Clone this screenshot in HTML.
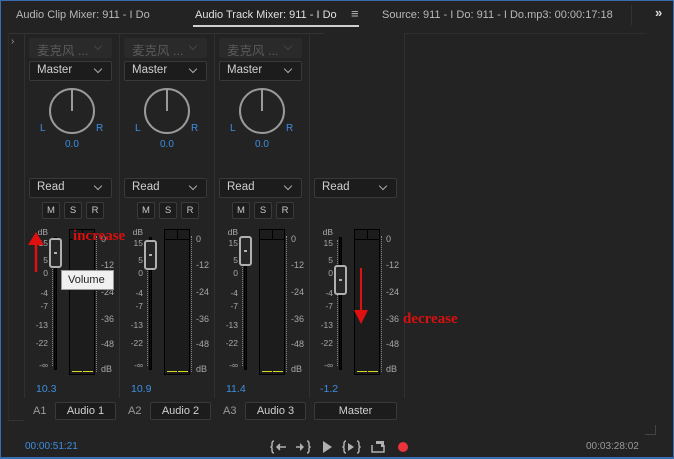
<!DOCTYPE html>
<html><head><meta charset="utf-8"><style>
*{margin:0;padding:0;box-sizing:border-box}
body{width:674px;height:459px;background:#232323;overflow:hidden;position:relative;font-family:"Liberation Sans","Noto Sans CJK SC",sans-serif;color:#cfcfcf}
.a{position:absolute}
.frame{position:absolute;left:0;top:0;width:674px;height:459px;border:1px solid #3a6db0;border-bottom:2px solid #3a6db0;pointer-events:none}
.tab{position:absolute;top:9px;font-size:11px;color:#b8b8b8;white-space:nowrap}
.dd{position:absolute;height:20px;border:1px solid #393939;background:#1c1c1c;border-radius:2px;font-size:11.5px;color:#d0d0d0;padding:2px 0 0 7px}
.dd i{position:absolute;right:10px;top:4px;width:6px;height:6px;border-right:1px solid #aaa;border-bottom:1px solid #aaa;transform:rotate(45deg)}
.cn{background:#2a2a2a;border-color:#2a2a2a;color:#5a5a5a;font-size:12.5px;padding-top:1px}
.cn i{border-color:#444}
.knob{position:absolute;width:46px;height:46px;border:2px solid #9a9a9a;border-radius:50%}
.knob:after{content:"";position:absolute;left:20px;top:-1px;width:2px;height:22px;background:#9a9a9a}
.blue{color:#3d8ee0}
.btn{position:absolute;top:202px;width:18px;height:17px;border:1px solid #3a3a3a;background:#1c1c1c;border-radius:2px;font-size:9.5px;text-align:center;line-height:15px;color:#c8c8c8}
.sm{position:absolute;font-size:8.5px;color:#a8a8a8;white-space:nowrap}
.track{position:absolute;width:3px;background:#0c0c0c;border:1px solid #000}
.fk{position:absolute;width:13px;height:30px;border:2px solid #b0b0b0;border-radius:3px;background:#262626}
.fk:after{content:"";position:absolute;left:3px;top:12px;width:3px;height:2px;background:#b0b0b0}
.meter{position:absolute;width:26px;height:146px;border:1px solid #000;background:#1c1c1c}
.meter:before{content:"";position:absolute;left:0;top:0;width:24px;height:9px;border-bottom:1px solid #000}
.meter:after{content:"";position:absolute;left:12px;top:0;width:1px;height:9px;background:#000}
.yl{position:absolute;bottom:2px;height:1px;width:10px;background:#d8d820}
.sep{position:absolute;top:33px;width:1px;height:365px;background:#303030}
.name{position:absolute;top:402px;height:18px;border:1px solid #393939;background:#1c1c1c;border-radius:2px;font-size:11px;text-align:center;line-height:16px;color:#d0d0d0}
.ticks{position:absolute;width:3px;border-left:1px dotted #888}
</style></head><body>

<div class="tab" style="left:16px">Audio Clip Mixer: 911 - I Do</div>
<div class="tab" style="left:195px;color:#e0e0e0">Audio Track Mixer: 911 - I Do</div>
<div class="a" style="left:193px;top:25px;width:166px;height:2px;background:#cfcfcf"></div>
<div class="tab" style="left:351px;top:6px;font-size:13px">≡</div>
<div class="tab" style="left:382px">Source: 911 - I Do: 911 - I Do.mp3: 00:00:17:18</div>
<div class="a" style="left:631px;top:5px;width:1px;height:20px;background:#333"></div>
<div class="tab" style="left:655px;top:5px;font-weight:bold;color:#ddd;font-size:13px">»</div>
<div class="a" style="left:8px;top:33px;width:316px;height:1px;background:#333"></div>
<div class="a" style="left:405px;top:33px;width:240px;height:1px;background:#2e2e2e"></div>
<div class="a" style="left:11px;top:36px;font-size:10px;color:#999">›</div>
<div class="a" style="left:8px;top:420px;width:16px;height:1px;background:#333"></div>
<div class="a" style="left:8px;top:33px;width:1px;height:387px;background:#2a2a2a"></div>

<div class="sep" style="left:24px"></div><div class="sep" style="left:119px"></div><div class="sep" style="left:214px"></div><div class="sep" style="left:309px"></div>
<div class="a" style="left:404px;top:33px;width:1px;height:365px;background:#303030"></div>

<div class="dd cn" style="left:29px;top:38px;width:83px">麦克风 ...<i></i></div>
<div class="dd" style="left:29px;top:61px;width:83px">Master<i></i></div>
<div class="knob" style="left:49px;top:88px"></div>
<div class="a blue" style="left:40px;top:123px;font-size:10px">L</div><div class="a blue" style="left:96px;top:123px;font-size:10px">R</div>
<div class="a blue" style="left:65px;top:139px;font-size:10px">0.0</div>
<div class="dd" style="left:29px;top:178px;width:83px">Read<i></i></div>
<div class="btn" style="left:42px">M</div><div class="btn" style="left:64px">S</div><div class="btn" style="left:86px">R</div>
<div class="a blue" style="left:36px;top:383px;font-size:10.5px">10.3</div>
<div class="a" style="left:33px;top:405px;font-size:11px;color:#999">A1</div>
<div class="name" style="left:55px;width:61px">Audio 1</div>

<div class="dd cn" style="left:124px;top:38px;width:83px">麦克风 ...<i></i></div>
<div class="dd" style="left:124px;top:61px;width:83px">Master<i></i></div>
<div class="knob" style="left:144px;top:88px"></div>
<div class="a blue" style="left:135px;top:123px;font-size:10px">L</div><div class="a blue" style="left:191px;top:123px;font-size:10px">R</div>
<div class="a blue" style="left:160px;top:139px;font-size:10px">0.0</div>
<div class="dd" style="left:124px;top:178px;width:83px">Read<i></i></div>
<div class="btn" style="left:137px">M</div><div class="btn" style="left:159px">S</div><div class="btn" style="left:181px">R</div>
<div class="a blue" style="left:131px;top:383px;font-size:10.5px">10.9</div>
<div class="a" style="left:128px;top:405px;font-size:11px;color:#999">A2</div>
<div class="name" style="left:150px;width:61px">Audio 2</div>

<div class="dd cn" style="left:219px;top:38px;width:83px">麦克风 ...<i></i></div>
<div class="dd" style="left:219px;top:61px;width:83px">Master<i></i></div>
<div class="knob" style="left:239px;top:88px"></div>
<div class="a blue" style="left:230px;top:123px;font-size:10px">L</div><div class="a blue" style="left:286px;top:123px;font-size:10px">R</div>
<div class="a blue" style="left:255px;top:139px;font-size:10px">0.0</div>
<div class="dd" style="left:219px;top:178px;width:83px">Read<i></i></div>
<div class="btn" style="left:232px">M</div><div class="btn" style="left:254px">S</div><div class="btn" style="left:276px">R</div>
<div class="a blue" style="left:226px;top:383px;font-size:10.5px">11.4</div>
<div class="a" style="left:223px;top:405px;font-size:11px;color:#999">A3</div>
<div class="name" style="left:245px;width:61px">Audio 3</div>

<div class="dd" style="left:314px;top:178px;width:83px">Read<i></i></div>
<div class="a blue" style="left:320px;top:383px;font-size:10.5px">-1.2</div>
<div class="name" style="left:314px;width:83px">Master</div>

<div id="fm"></div>
<script>
var L=[[25,238,0],[120,240,0],[215,236,0],[310,265,1]];
var h='';
L.forEach(function(s){
 var x=s[0];
 var left=s[3]?['dB',229,'15',240,'8',257,'0',274,'-4',293,'-7',305,'-13',325,'-22',342,'-∞',362]:['dB',229,'15',240,'5',257,'0',270,'-4',290,'-7',303,'-13',322,'-22',340,'-∞',362];
 for(var i=0;i<left.length;i+=2){h+='<div class="sm" style="right:'+(674-(x+23))+'px;top:'+(left[i+1]-2)+'px">'+left[i]+'</div>';}
 h+='<div class="ticks" style="left:'+(x+27)+'px;top:240px;height:126px"></div>';
 h+='<div class="track" style="left:'+(x+29)+'px;top:237px;height:133px"></div>';
 h+='<div class="fk" style="left:'+(x+24)+'px;top:'+s[1]+'px"></div>';
 h+='<div class="meter" style="left:'+(x+44)+'px;top:229px"><div class="yl" style="left:2px"></div><div class="yl" style="left:13px"></div></div>';
 h+='<div class="ticks" style="left:'+(x+71)+'px;top:236px;height:136px"></div>';
 var r=[['0',234],['-12',260],['-24',287],['-36',314],['-48',339],['dB',364]];
 r.forEach(function(t){h+='<div class="sm" style="left:'+(x+76)+'px;top:'+t[1]+'px;font-size:9px">'+t[0]+'</div>';});
});
document.getElementById('fm').innerHTML=h;
</script>

<div class="a" style="left:61px;top:270px;width:53px;height:20px;background:#f0f0f0;border:1px solid #999;font-size:11px;color:#222;padding:3px 0 0 6px">Volume</div>

<svg class="a" style="left:0;top:0" width="674" height="459">
<path d="M36 272 V240" stroke="#e01010" stroke-width="2.5"/>
<path d="M28 245 L36 232 L44 245 Z" fill="#e01010"/>
<path d="M361 268 V312" stroke="#e01010" stroke-width="2"/>
<path d="M354 310 L361 324 L368 310 Z" fill="#e01010"/>
<text x="73" y="240" font-family="Liberation Serif,serif" font-size="15" font-weight="bold" fill="#d81010">increase</text>
<text x="403" y="323" font-family="Liberation Serif,serif" font-size="15" font-weight="bold" fill="#d81010">decrease</text>
<g stroke="#b0b0b0" fill="none" stroke-width="1.5">
<path d="M274 441 q-2 0 -2 3 v2 l-1 1 l1 1 v2 q0 3 2 3"/><path d="M286 447 h-8"/><path d="M280 444 l-3 3 l3 3" fill="#b0b0b0"/>
<path d="M307 441 q2 0 2 3 v2 l1 1 l-1 1 v2 q0 3 -2 3"/><path d="M296 447 h7"/>
<path d="M346 441 q-2 0 -2 3 v2 l-1 1 l1 1 v2 q0 3 2 3"/><path d="M357 441 q2 0 2 3 v2 l1 1 l-1 1 v2 q0 3 -2 3"/>
<path d="M372 445 v7 h12 v-7"/>
</g>
<path d="M300 443 l4 4 l-4 4 Z" fill="#b0b0b0"/>
<path d="M323 441 l9 6 l-9 6 Z" fill="#b0b0b0"/>
<path d="M348 443 l6 4 l-6 4 Z" fill="#b0b0b0"/>
<path d="M376 441 h8 v6 h-3 v-3 h-5 Z" fill="#b0b0b0"/>
<circle cx="403" cy="447" r="5" fill="#e8343a"/>
</svg>
<div class="a blue" style="left:25px;top:441px;font-size:10px">00:00:51:21</div>
<div class="a" style="left:586px;top:441px;font-size:10px;color:#999">00:03:28:02</div>
<div class="a" style="left:655px;top:425px;width:1px;height:9px;background:#444"></div>
<div class="a" style="left:645px;top:434px;width:11px;height:1px;background:#444"></div>
<div class="frame"></div>
</body></html>
